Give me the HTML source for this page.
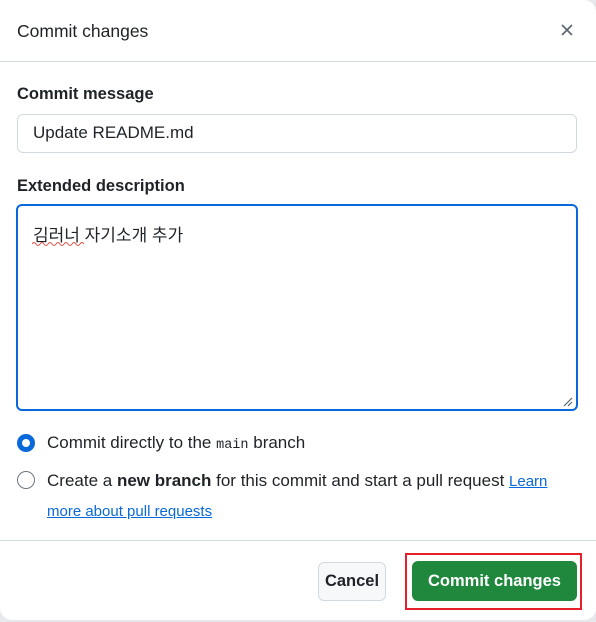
<!DOCTYPE html>
<html><head><meta charset="utf-8"><style>
body{margin:0;width:596px;height:622px;background:#e6e8eb;font-family:"Liberation Sans","Noto Sans CJK KR",sans-serif;color:#1f2328;overflow:hidden;position:relative}
.dlg{position:absolute;left:0;top:0;width:596px;height:620px;background:#fff;border-radius:0 12px 12px 12px}
.a{position:absolute}
.lbl{font-size:16.5px;font-weight:bold}
.inp{border:1px solid #d1d9e0;border-radius:6px;box-sizing:border-box}
.radio{width:18px;height:18px;border-radius:50%;box-sizing:border-box}
</style></head><body>
<div class="dlg">
<div class="a" style="left:17px;top:21px;font-size:17.5px">Commit changes</div>
<svg class="a" style="left:561px;top:24px" width="12" height="12"><path d="M1 1L11 11M11 1L1 11" stroke="#59636e" stroke-width="1.6"/></svg>
<div class="a" style="left:0;top:61px;width:596px;height:1px;background:#d1d9e0"></div>
<div class="a lbl" style="left:17px;top:85px">Commit message</div>
<div class="a inp" style="left:17px;top:114px;width:560px;height:39px;background:#fff"></div>
<div class="a" style="left:33px;top:123px;font-size:17px">Update README.md</div>
<div class="a lbl" style="left:17px;top:177px">Extended description</div>
<div class="a" style="left:16px;top:204px;width:562px;height:207px;border:2px solid #0969da;border-radius:6px;box-sizing:border-box"></div>
<div class="a" style="left:33px;top:221px;font-size:17px">김러너 자기소개 추가</div>
<svg class="a" style="left:32px;top:241px" width="52" height="5"><path d="M0 3 Q2 0 4 3 T8 3 T12 3 T16 3 T20 3 T24 3 T28 3 T32 3 T36 3 T40 3 T44 3 T48 3 T52 3" stroke="#e5534b" fill="none" stroke-width="1"/></svg>
<svg class="a" style="left:563px;top:397px" width="10" height="10"><path d="M9 1L1 9M9 5L5 9" stroke="#59636e" stroke-width="1.2"/></svg>
<div class="a radio" style="left:17px;top:434px;border:5px solid #0969da"></div>
<div class="a" style="left:47px;top:433px;font-size:17px">Commit directly to the <span style="font-family:'Liberation Mono',monospace;font-size:13.5px">main</span> branch</div>
<div class="a radio" style="left:17px;top:471px;border:1px solid #6e7781"></div>
<div class="a" style="left:47px;top:466px;font-size:17px;line-height:29px;width:512px">Create a <b>new branch</b> for this commit and start a pull request <span style="color:#0969da;text-decoration:underline;font-size:15px">Learn more about pull requests</span></div>
<div class="a" style="left:0;top:540px;width:596px;height:1px;background:#d1d9e0"></div>
<div class="a" style="left:318px;top:562px;width:68px;height:39px;background:#f6f8fa;border:1px solid #d1d9e0;border-radius:6px;box-sizing:border-box;font-size:16.5px;font-weight:bold;text-align:center;line-height:37px">Cancel</div>
<div class="a" style="left:405px;top:553px;width:177px;height:57px;border:2px solid #e5202a;box-sizing:border-box"></div>
<div class="a" style="left:412px;top:561px;width:165px;height:40px;background:#1f883d;border-radius:6px;color:#fff;font-size:16.5px;font-weight:bold;text-align:center;line-height:40px">Commit changes</div>
</div>
</body></html>
